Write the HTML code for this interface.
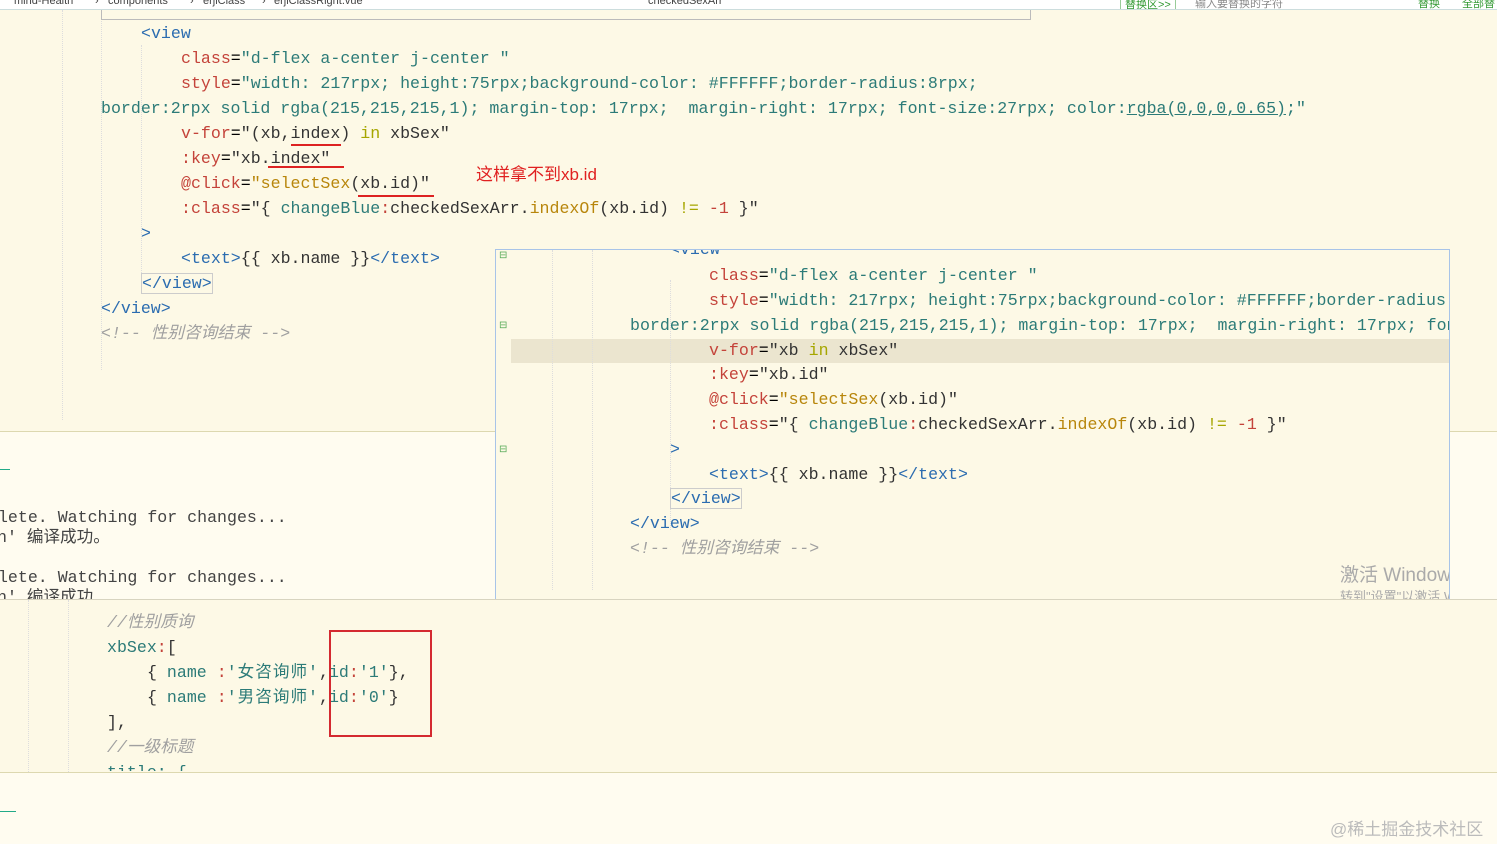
<!DOCTYPE html>
<html><head><meta charset="utf-8"><style>
body{margin:0;width:1497px;height:843px;overflow:hidden;background:#fdf9e6;position:relative;font-family:"Liberation Mono","Noto Sans CJK SC",monospace;font-size:16.6px;}
.a{position:absolute;white-space:pre;line-height:25px;}
.t{color:#2b6cb0}.r{color:#c4433a}.s{color:#2c7b78}.k{color:#333}.y{color:#a6a600}.c{color:#a0a0a0;font-style:italic}.o{color:#b8860b}
.ln{position:absolute;border-left:1px dotted #ddd;}
.h{position:absolute;top:-5px;white-space:nowrap}
</style></head><body>
<div style="position:absolute;left:0;top:0;width:1497px;height:9px;background:#fff;border-bottom:1px solid #cdd;font-family:'Liberation Sans','Noto Sans CJK SC',sans-serif;font-size:11px;color:#444;overflow:hidden;z-index:2">
<span class="h" style="left:14px">mind-Health</span><span class="h" style="left:95px">›</span>
<span class="h" style="left:108px">components</span><span class="h" style="left:190px">›</span>
<span class="h" style="left:203px">erjiClass</span><span class="h" style="left:262px">›</span>
<span class="h" style="left:274px">erjiClassRight.vue</span>
<span class="h" style="left:648px">checkedSexArr</span>
<span class="h" style="left:1120px;border:1px solid #9c9;padding:0 4px;color:#393">替换区>></span>
<span class="h" style="left:1195px;color:#888">输入要替换的字符</span>
<span class="h" style="left:1418px;color:#393">替换</span><span class="h" style="left:1462px;color:#393">全部替</span>
</div>
<div class="ln" style="left:62px;top:10px;height:410px"></div>
<div class="ln" style="left:101px;top:10px;height:360px"></div>
<div class="ln" style="left:141px;top:45px;height:240px"></div>
<div style="position:absolute;left:101px;top:10px;width:928px;height:9px;border:1px solid #bbb;border-top:none"></div>
<div class="a" style="left:101px;top:-12px"><span class="t">&lt;view</span> <span class="r">class</span>=<span class="s">"erjiwrap w-684 d-flex"   </span><span class="r">style</span>=<span class="s">"justify-content: flex-start; flex-wrap: wrap;"</span></div>
<div class="a" style="left:141px;top:21px"><span class="t">&lt;view</span></div>
<div class="a" style="left:181px;top:46px"><span class="r">class</span>=<span class="s">"d-flex a-center j-center "</span></div>
<div class="a" style="left:181px;top:71px"><span class="r">style</span>=<span class="s">"width: 217rpx; height:75rpx;background-color: #FFFFFF;border-radius:8rpx;</span></div>
<div class="a" style="left:101px;top:96px"><span class="s">border:2rpx solid rgba(215,215,215,1); margin-top: 17rpx;  margin-right: 17rpx; font-size:27rpx; color:<u>rgba(0,0,0,0.65)</u>;"</span></div>
<div class="a" style="left:181px;top:121px"><span class="r">v-for</span>=<span class="k">"(xb,index) </span><span class="y">in</span><span class="k"> xbSex"</span></div>
<div class="a" style="left:181px;top:146px"><span class="r">:key</span>=<span class="k">"xb.index"</span></div>
<div class="a" style="left:181px;top:171px"><span class="r">@click</span>=<span class="o">"selectSex</span><span class="k">(xb.id)"</span></div>
<div class="a" style="left:181px;top:196px"><span class="r">:class</span>=<span class="k">"{ </span><span class="s">changeBlue</span><span class="r">:</span><span class="k">checkedSexArr.</span><span class="o">indexOf</span><span class="k">(xb.id) </span><span class="y">!=</span> <span class="r">-1</span><span class="k"> }"</span></div>
<div class="a" style="left:141px;top:221px"><span class="t">&gt;</span></div>
<div class="a" style="left:181px;top:246px"><span class="t">&lt;text&gt;</span><span class="k">{{ xb.name }}</span><span class="t">&lt;/text&gt;</span></div>
<div class="a" style="left:141px;top:271px"><span class="t" style="border:1px solid #ccc">&lt;/view&gt;</span></div>
<div class="a" style="left:101px;top:296px"><span class="t">&lt;/view&gt;</span></div>
<div class="a c" style="left:101px;top:321px">&lt;!-- 性别咨询结束 --&gt;</div>
<div style="position:absolute;left:291px;top:144px;width:50px;height:2px;background:#d22"></div>
<div style="position:absolute;left:268px;top:166px;width:76px;height:2px;background:#d22"></div>
<div style="position:absolute;left:358px;top:195px;width:76px;height:2px;background:#d22"></div>
<div style="position:absolute;left:476px;top:160px;color:#e02020;font-family:'Liberation Sans','Noto Sans CJK SC',sans-serif;font-size:17px">这样拿不到xb.id</div>

<div style="position:absolute;left:0;top:431px;width:1497px;height:168px;background:#fffcf0;border-top:1px solid #ddd8b0"></div>
<div style="position:absolute;left:0;top:469px;width:10px;height:1px;background:#2a8"></div>
<div class="a k" style="left:-12px;top:505px;color:#444">plete. Watching for changes...</div>
<div class="a k" style="left:-3px;top:525px;color:#444">n' 编译成功。</div>
<div class="a k" style="left:-12px;top:565px;color:#444">plete. Watching for changes...</div>
<div class="a k" style="left:-3px;top:585px;color:#444">n' 编译成功</div>

<div style="position:absolute;left:495px;top:249px;width:953px;height:349px;background:#fdf9e6;border:1px solid #a8c4e8;overflow:hidden">
 <div style="position:absolute;left:15px;top:89px;width:940px;height:24px;background:#ebe5cf"></div>
 <div class="ln" style="left:56px;top:0;height:340px"></div>
 <div class="ln" style="left:96px;top:0;height:340px"></div>
 <div class="ln" style="left:174px;top:30px;height:250px"></div>
 <div style="position:absolute;left:3px;top:0;color:#5a5;font-size:10px">⊟</div>
 <div style="position:absolute;left:3px;top:70px;color:#5a5;font-size:10px">⊟</div>
 <div style="position:absolute;left:3px;top:194px;color:#5a5;font-size:10px">⊟</div>
 <div class="a" style="left:174px;top:-13px"><span class="t">&lt;view</span></div>
 <div class="a" style="left:213px;top:13px"><span class="r">class</span>=<span class="s">"d-flex a-center j-center "</span></div>
 <div class="a" style="left:213px;top:38px"><span class="r">style</span>=<span class="s">"width: 217rpx; height:75rpx;background-color: #FFFFFF;border-radius:8rpx;</span></div>
 <div class="a" style="left:134px;top:63px"><span class="s">border:2rpx solid rgba(215,215,215,1); margin-top: 17rpx;  margin-right: 17rpx; font-size</span></div>
 <div class="a" style="left:213px;top:88px"><span class="r">v-for</span>=<span class="k">"xb </span><span class="y">in</span><span class="k"> xbSex"</span></div>
 <div class="a" style="left:213px;top:112px"><span class="r">:key</span>=<span class="k">"xb.id"</span></div>
 <div class="a" style="left:213px;top:137px"><span class="r">@click</span>=<span class="o">"selectSex</span><span class="k">(xb.id)"</span></div>
 <div class="a" style="left:213px;top:162px"><span class="r">:class</span>=<span class="k">"{ </span><span class="s">changeBlue</span><span class="r">:</span><span class="k">checkedSexArr.</span><span class="o">indexOf</span><span class="k">(xb.id) </span><span class="y">!=</span> <span class="r">-1</span><span class="k"> }"</span></div>
 <div class="a" style="left:174px;top:187px"><span class="t">&gt;</span></div>
 <div class="a" style="left:213px;top:212px"><span class="t">&lt;text&gt;</span><span class="k">{{ xb.name }}</span><span class="t">&lt;/text&gt;</span></div>
 <div class="a" style="left:174px;top:236px"><span class="t" style="border:1px solid #ccc">&lt;/view&gt;</span></div>
 <div class="a" style="left:134px;top:261px"><span class="t">&lt;/view&gt;</span></div>
 <div class="a c" style="left:134px;top:286px">&lt;!-- 性别咨询结束 --&gt;</div>
 <div style="position:absolute;left:844px;top:310px;color:#aaa;font-family:'Liberation Sans','Noto Sans CJK SC',sans-serif;font-size:19px;white-space:nowrap">激活 Windows</div>
 <div style="position:absolute;left:844px;top:336px;color:#aaa;font-family:'Liberation Sans','Noto Sans CJK SC',sans-serif;font-size:13px;white-space:nowrap">转到"设置"以激活 Windows</div>
</div>

<div style="position:absolute;left:0;top:599px;width:1497px;height:173px;background:#fdf9e6;border-top:1px solid #d8d4c0"></div>
<div class="ln" style="left:28px;top:600px;height:172px"></div>
<div class="ln" style="left:68px;top:600px;height:172px"></div>
<div class="a c" style="left:107px;top:610px">//性别质询</div>
<div class="a" style="left:107px;top:635px"><span class="s">xbSex</span><span class="r">:</span><span class="k">[</span></div>
<div class="a" style="left:147px;top:660px"><span class="k">{ </span><span class="s">name</span> <span class="r">:</span><span class="s" style="letter-spacing:1px">'女咨询师'</span><span class="k">,</span><span class="s">id</span><span class="r">:</span><span class="s">'1'</span><span class="k">},</span></div>
<div class="a" style="left:147px;top:685px"><span class="k">{ </span><span class="s">name</span> <span class="r">:</span><span class="s" style="letter-spacing:1px">'男咨询师'</span><span class="k">,</span><span class="s">id</span><span class="r">:</span><span class="s">'0'</span><span class="k">}</span></div>
<div class="a k" style="left:107px;top:710px">],</div>
<div class="a c" style="left:107px;top:735px">//一级标题</div>
<div class="a s" style="left:107px;top:760px;height:11px;overflow:hidden">title: {</div>
<div style="position:absolute;left:329px;top:630px;width:99px;height:103px;border:2px solid #d42a30"></div>
<div style="position:absolute;left:0;top:772px;width:1497px;height:71px;background:#fffcf0;border-top:1px solid #ddd8b0"></div>
<div style="position:absolute;left:0;top:811px;width:16px;height:1px;background:#2a8"></div>
<div style="position:absolute;left:1330px;top:815px;color:#bbb;font-family:'Liberation Sans','Noto Sans CJK SC',sans-serif;font-size:17px;white-space:nowrap">@稀土掘金技术社区</div>
</body></html>
